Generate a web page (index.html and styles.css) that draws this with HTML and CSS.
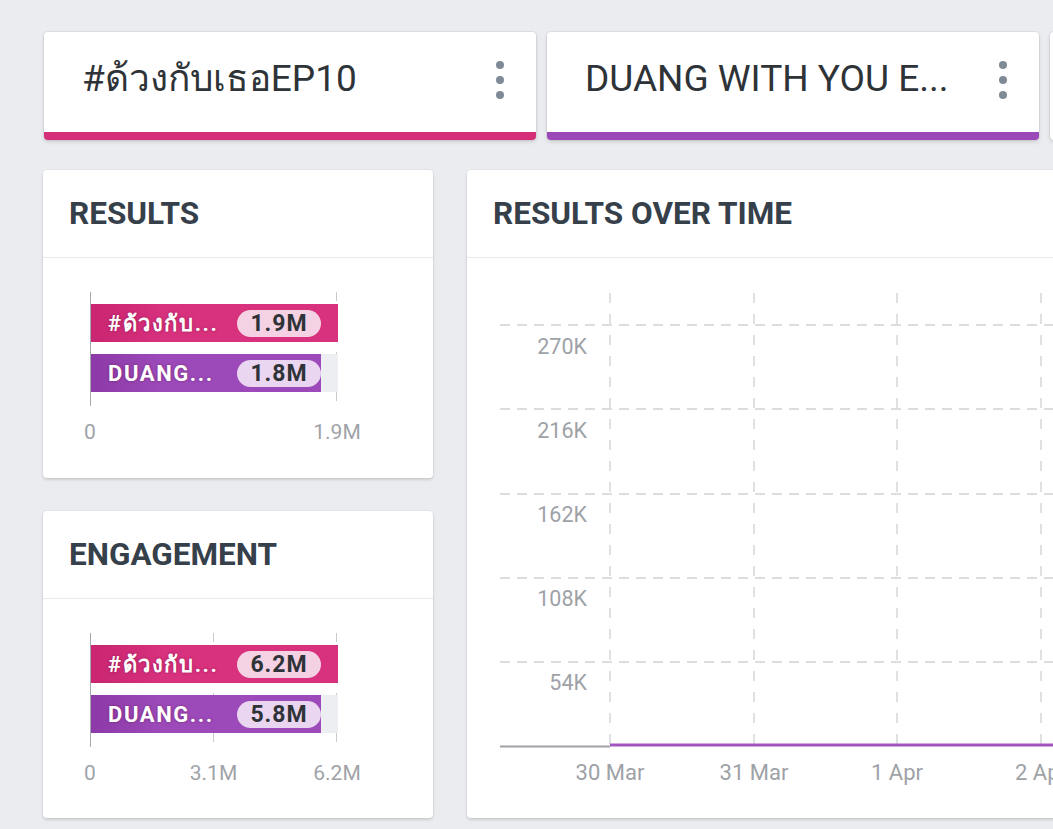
FILE: index.html
```html
<!DOCTYPE html>
<html lang="th">
<head>
<meta charset="utf-8">
<title>Compare</title>
<link rel="stylesheet" href="styles.css">
</head>
<body>
<div class="page">
  <div class="tabs">
    <div class="tab tab-pink">
      <span class="tab-title">#ด้วงกับเธอEP10</span>
      <span class="kebab"><i></i><i></i><i></i></span>
    </div>
    <div class="tab tab-purple">
      <span class="tab-title">DUANG WITH YOU E...</span>
      <span class="kebab"><i></i><i></i><i></i></span>
    </div>
    <div class="tab tab-blank"></div>
  </div>

  <div class="grid">
    <div class="col-left">
      <section class="card card-results">
        <header class="card-head">RESULTS</header>
        <div class="bar-body">
          <div class="plot plot-2">
            <div class="bar-row">
              <div class="track"></div>
              <div class="fill fill-pink" style="width:100%"></div>
              <div class="bar-content"><span class="bar-label">#ด้วงกับ...</span><span class="pill pill-pink">1.9M</span></div>
            </div>
            <div class="bar-row">
              <div class="track"></div>
              <div class="fill fill-purple" style="width:93%"></div>
              <div class="bar-content"><span class="bar-label">DUANG...</span><span class="pill pill-purple">1.8M</span></div>
            </div>
          </div>
          <div class="axis"><span>0</span><span>1.9M</span></div>
        </div>
      </section>

      <section class="card card-engage">
        <header class="card-head">ENGAGEMENT</header>
        <div class="bar-body">
          <div class="plot plot-3">
            <div class="bar-row">
              <div class="track"></div>
              <div class="fill fill-pink" style="width:100%"></div>
              <div class="bar-content"><span class="bar-label">#ด้วงกับ...</span><span class="pill pill-pink">6.2M</span></div>
            </div>
            <div class="bar-row">
              <div class="track"></div>
              <div class="fill fill-purple" style="width:93%"></div>
              <div class="bar-content"><span class="bar-label">DUANG...</span><span class="pill pill-purple">5.8M</span></div>
            </div>
          </div>
          <div class="axis"><span>0</span><span>3.1M</span><span>6.2M</span></div>
        </div>
      </section>
    </div>

    <section class="card card-time">
      <header class="card-head">RESULTS OVER TIME</header>
      <div class="time-body">
        <svg class="time-chart" width="700" height="560" viewBox="0 0 700 560">
          <g class="hgrid">
            <line x1="33" y1="67" x2="700" y2="67"/>
            <line x1="33" y1="151" x2="700" y2="151"/>
            <line x1="33" y1="236" x2="700" y2="236"/>
            <line x1="33" y1="320" x2="700" y2="320"/>
            <line x1="33" y1="404" x2="700" y2="404"/>
          </g>
          <g class="vgrid">
            <line x1="143" y1="35" x2="143" y2="488"/>
            <line x1="287" y1="35" x2="287" y2="488"/>
            <line x1="430" y1="35" x2="430" y2="488"/>
            <line x1="574" y1="35" x2="574" y2="488"/>
          </g>
          <line class="base" x1="33" y1="488.5" x2="143" y2="488.5"/>
          <line class="series" x1="143" y1="487" x2="700" y2="487"/>
          <g class="ylab">
            <text x="120" y="96">270K</text>
            <text x="120" y="180">216K</text>
            <text x="120" y="264">162K</text>
            <text x="120" y="348">108K</text>
            <text x="120" y="432">54K</text>
          </g>
          <g class="xlab">
            <text x="143" y="522">30 Mar</text>
            <text x="287" y="522">31 Mar</text>
            <text x="430" y="522">1 Apr</text>
            <text x="574" y="522">2 Apr</text>
          </g>
        </svg>
      </div>
    </section>
  </div>
</div>
</body>
</html>
```

FILE: styles.css
```css
* { box-sizing: border-box; }

html, body {
  margin: 0;
  padding: 0;
}

body {
  background: #ebecef;
  font-family: Roboto, "Noto Sans", "DejaVu Sans", sans-serif;
  width: 1053px;
  height: 829px;
  overflow: hidden;
}

.page {
  padding: 32px 0 0 43px;
  width: 1053px;
  height: 829px;
  overflow: hidden;
}

/* ---------- tabs ---------- */
.tabs {
  display: flex;
  gap: 11px;
  margin-left: 1px;
}

.tab {
  flex: 0 0 492px;
  height: 108px;
  background: #fff;
  border-radius: 4px;
  border-bottom: 8px solid #d62f7a;
  box-shadow: 0 0 0 1px rgba(0,0,0,0.05), 0 2px 4px rgba(0,0,0,0.12);
  display: flex;
  align-items: flex-start;
  padding: 0 32px 0 38px;
}

.tab-purple { border-bottom-color: #9b49b8; }
.tab-blank { border-bottom-color: #fff; }

.tab-title {
  margin-top: 25px;
  font-size: 37px;
  line-height: 43px;
  color: #2e3338;
  white-space: nowrap;
}

.kebab {
  margin-left: auto;
  margin-top: 29px;
  display: flex;
  flex-direction: column;
  gap: 7px;
}

.kebab i {
  display: block;
  width: 8px;
  height: 8px;
  border-radius: 50%;
  background: #7e8a95;
}

/* ---------- grid ---------- */
.grid {
  display: flex;
  gap: 34px;
  margin-top: 30px;
}

.col-left {
  flex: 0 0 390px;
  display: flex;
  flex-direction: column;
  gap: 33px;
}

.card {
  background: #fff;
  border-radius: 4px;
  box-shadow: 0 0 0 1px rgba(0,0,0,0.03), 0 2px 3px rgba(0,0,0,0.12);
}

.card-head {
  padding: 26px 26px 25px;
  font-size: 31.5px;
  line-height: 36px;
  font-weight: 700;
  color: #36404a;
  border-bottom: 1px solid #e7e9ec;
  white-space: nowrap;
}

.card-results { height: 308px; }
.card-engage { height: 307px; }

/* ---------- bar charts ---------- */
.bar-body {
  padding: 34px 0 0 47px;
}

.plot {
  position: relative;
  width: 248px;
  height: 114px;
  padding: 12px 0 0 1px;
  display: flex;
  flex-direction: column;
  gap: 12px;
  background-repeat: no-repeat;
}

.plot-2 {
  background-image:
    linear-gradient(#a6a9ad, #a6a9ad),
    repeating-linear-gradient(to bottom, #c9cccf 0 9px, transparent 9px 20px);
  background-size: 1px 100%, 1px 100%;
  background-position: 0 0, 246px 0;
}

.plot-3 {
  background-image:
    linear-gradient(#a6a9ad, #a6a9ad),
    repeating-linear-gradient(to bottom, #c9cccf 0 9px, transparent 9px 20px),
    repeating-linear-gradient(to bottom, #c9cccf 0 9px, transparent 9px 20px);
  background-size: 1px 100%, 1px 100%, 1px 100%;
  background-position: 0 0, 123px 0, 246px 0;
}

.bar-row {
  display: grid;
  height: 38px;
  width: 247px;
}

.track, .fill, .bar-content {
  grid-area: 1 / 1;
}

.track { background: #eceef1; }

.fill { height: 100%; }

.fill-pink {
  background: linear-gradient(90deg, #c92571 0%, #d8317d 30%, #d8317d 100%);
}

.fill-purple {
  background: linear-gradient(90deg, #8d39a8 0%, #9c4ab9 30%, #9c4ab9 100%);
}

.bar-content {
  display: flex;
  align-items: center;
  padding-left: 17px;
}

.bar-label {
  width: 129px;
  color: #fff;
  font-weight: 700;
  font-size: 22px;
  letter-spacing: 1.6px;
  white-space: nowrap;
  text-shadow: 0 0 3px rgba(80,0,40,0.45);
}

.pill {
  width: 84px;
  height: 27px;
  border-radius: 14px;
  display: flex;
  align-items: center;
  justify-content: center;
  font-weight: 700;
  font-size: 23px;
  letter-spacing: 1px;
  color: #2f3338;
}

.pill-pink { background: #f4d2e4; }
.pill-purple { background: #ead6f0; }

.axis {
  width: 247px;
  margin-top: 14px;
  display: flex;
  justify-content: space-between;
}

.axis span {
  width: 0;
  display: flex;
  justify-content: center;
  font-size: 21px;
  line-height: 24px;
  color: #9fa3a8;
  white-space: nowrap;
}

/* ---------- time chart ---------- */
.card-time {
  flex: 0 0 700px;
  height: 648px;
  border-radius: 4px 0 0 4px;
}

.time-body {
  height: 560px;
  overflow: hidden;
}

.time-chart { display: block; }

.hgrid line {
  stroke: #cfd2d5;
  stroke-width: 1.5;
  stroke-dasharray: 10 7;
}

.vgrid line {
  stroke: #d3d6d9;
  stroke-width: 1.5;
  stroke-dasharray: 10 11;
}

.base {
  stroke: #9fa2a6;
  stroke-width: 2;
}

.series {
  stroke: #a155bf;
  stroke-width: 3;
}

.ylab text {
  font-family: Roboto, sans-serif;
  font-size: 21.5px;
  fill: #9ea2a7;
  text-anchor: end;
}

.xlab text {
  font-family: Roboto, sans-serif;
  font-size: 22px;
  fill: #9ea2a7;
  text-anchor: middle;
}
```
